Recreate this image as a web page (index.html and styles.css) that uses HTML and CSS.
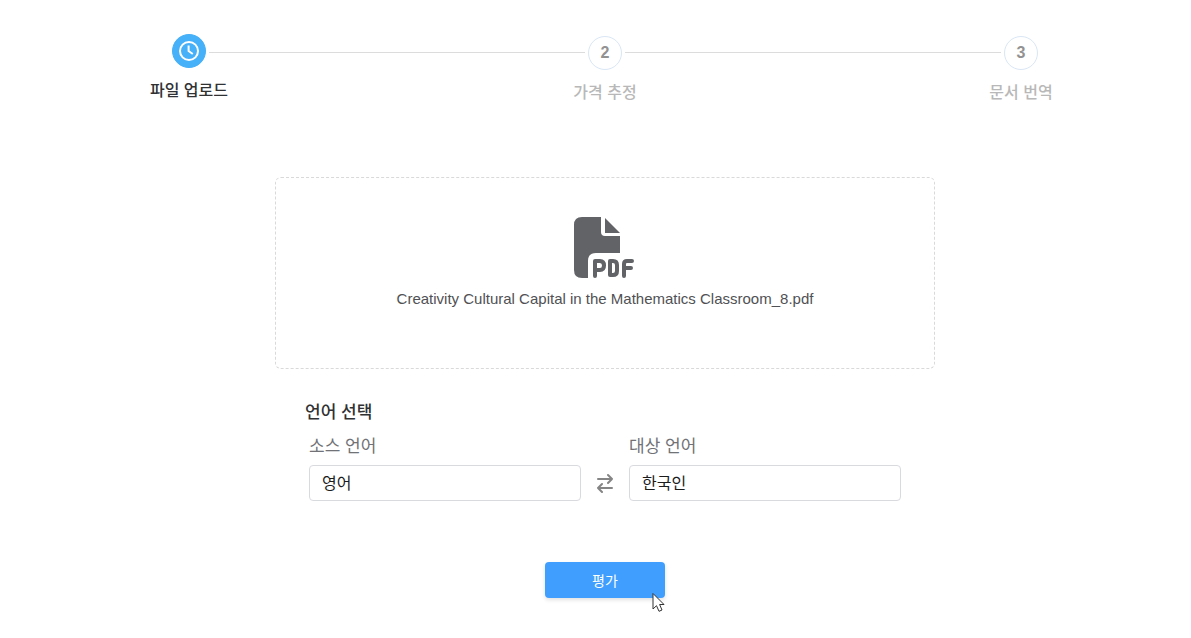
FILE: index.html
```html
<!DOCTYPE html>
<html lang="ko">
<head>
<meta charset="utf-8">
<meta name="viewport" content="width=device-width, initial-scale=1">
<title>문서 번역</title>
<link rel="stylesheet" href="styles.css">
</head>
<body>
<main class="page">
  <ol class="steps">
    <li class="step step-active">
      <span class="step-mark">
        <svg class="clock" viewBox="0 0 22 22" aria-hidden="true"><circle cx="11" cy="11" r="9"/><path d="M10.6 5.5V11l4.2 3"/></svg>
      </span>
      <span class="step-label">파일 업로드</span>
    </li>
    <li class="step-line" role="presentation"></li>
    <li class="step">
      <span class="step-mark">2</span>
      <span class="step-label">가격 추정</span>
    </li>
    <li class="step-line" role="presentation"></li>
    <li class="step">
      <span class="step-mark">3</span>
      <span class="step-label">문서 번역</span>
    </li>
  </ol>

  <section class="dropzone">
    <svg class="file-icon" viewBox="0 0 60 62" aria-hidden="true">
      <path class="solid" d="M7 0H26V15Q26 19 30 19H45V36H21Q13 36 13 44V61H7Q-1 61 -1 53V8Q-1 0 7 0Z"/>
      <path class="solid" d="M30 1L45 16H30Z"/>
      <path class="stroke" d="M20 59V44H25Q29 44 29 48.5T25 53H20M35 44V58H38Q42 58 42 54V48Q42 44 38 44ZM49 59V47Q49 44 52 44H57M49 51H56"/>
    </svg>
    <p class="file-name">Creativity Cultural Capital in the Mathematics Classroom_8.pdf</p>
  </section>

  <form class="form">
    <h2 class="form-title">언어 선택</h2>
    <div class="languages">
      <div class="field">
        <label class="field-label" for="source">소스 언어</label>
        <select class="field-input" id="source"><option>영어</option></select>
      </div>
      <button class="swap" type="button" aria-label="언어 바꾸기">
        <svg class="swap-icon" viewBox="0 0 18 20" aria-hidden="true"><path d="M2 6H16M12 2L16 6L12 10M16 15H2M6 11L2 15L6 19"/></svg>
      </button>
      <div class="field">
        <label class="field-label" for="target">대상 언어</label>
        <select class="field-input" id="target"><option>한국인</option></select>
      </div>
    </div>
    <button class="submit" type="button">평가
      <svg class="pointer" viewBox="0 0 14 20" aria-hidden="true"><path d="M2 0.5V16L5.5 12.7L8 18.3L11 17L8.6 11.5H13Z"/></svg>
    </button>
  </form>
</main>
</body>
</html>
```

FILE: styles.css
```css
* {
  box-sizing: border-box;
}

body {
  margin: 0;
  background: #fff;
  color: #303133;
  font-family: "Liberation Sans", "Noto Sans CJK KR", sans-serif;
  font-size: 16px;
}

.page {
  display: flex;
  flex-direction: column;
  align-items: center;
  padding: 34px 20px 36px 39px;
}

.steps {
  display: flex;
  align-items: flex-start;
  width: 100%;
  max-width: 866px;
  margin: 0;
  padding: 0;
  list-style: none;
}

.step {
  display: flex;
  flex-direction: column;
  align-items: center;
  gap: 11px;
  width: 34px;
  padding-top: 2px;
  color: #b8b8b8;
  font-weight: 500;
  line-height: 24px;
  white-space: nowrap;
}

.step-active {
  padding-top: 0;
  color: #303133;
}

.step-mark {
  display: flex;
  flex: none;
  align-items: center;
  justify-content: center;
  width: 34px;
  height: 34px;
  border: 1px solid #d9e6f5;
  border-radius: 50%;
  color: #929292;
  font-weight: 700;
}

.step-active .step-mark {
  border-color: #46b0f8;
  background: #46b0f8;
}

.clock {
  width: 22px;
  height: 22px;
  fill: none;
  stroke: #fff;
  stroke-width: 2;
}

.step-line {
  flex: 1;
  height: 1px;
  margin: 18px 3px 0;
  background: #dcdcdc;
}

.dropzone {
  display: flex;
  flex-direction: column;
  align-items: center;
  gap: 10px;
  width: 100%;
  max-width: 660px;
  min-height: 192px;
  margin-top: 72px;
  padding: 39px 20px;
  border: 1px dashed #d9d9d9;
  border-radius: 6px;
}

.file-icon {
  width: 60px;
  height: 62px;
  overflow: visible;
}

.solid {
  fill: #626367;
}

.stroke {
  fill: none;
  stroke: #626367;
  stroke-width: 4;
  stroke-linecap: round;
  stroke-linejoin: round;
}

.file-name {
  margin: 0;
  color: #505154;
  font-size: 15px;
  line-height: 20px;
}

.form {
  display: flex;
  flex-direction: column;
  width: 100%;
  max-width: 600px;
  margin-top: 32px;
}

.form-title {
  margin: 0;
  font-size: 17px;
  font-weight: 500;
  line-height: 24px;
}

.languages {
  display: flex;
  align-items: flex-end;
  padding: 8px 4px 0;
}

.field {
  display: flex;
  flex: 1;
  flex-direction: column;
  gap: 4px;
}

.field-label {
  color: #707276;
  font-size: 17px;
  line-height: 28px;
}

.field-input {
  width: 100%;
  height: 36px;
  padding: 0 12px;
  border: 1px solid #d8dade;
  border-radius: 4px;
  appearance: none;
  background: #fff;
  color: #1c1c1c;
  font: inherit;
}

.swap {
  display: flex;
  align-items: center;
  justify-content: center;
  width: 48px;
  height: 36px;
  padding: 0;
  border: 0;
  background: none;
}

.swap-icon {
  width: 18px;
  height: 20px;
  fill: none;
  stroke: #858585;
  stroke-width: 2;
  stroke-linecap: round;
  stroke-linejoin: round;
}

.submit {
  position: relative;
  align-self: center;
  width: 120px;
  height: 36px;
  margin-top: 61px;
  padding: 0;
  border: 0;
  border-radius: 4px;
  background: #409eff;
  box-shadow: 0 2px 4px #0000001f;
  color: #fff;
  font-family: inherit;
  font-size: 14px;
}

.pointer {
  position: absolute;
  top: 31px;
  right: 0;
  width: 14px;
  height: 20px;
  fill: #fff;
  stroke: #333;
  stroke-width: 1;
}
```
